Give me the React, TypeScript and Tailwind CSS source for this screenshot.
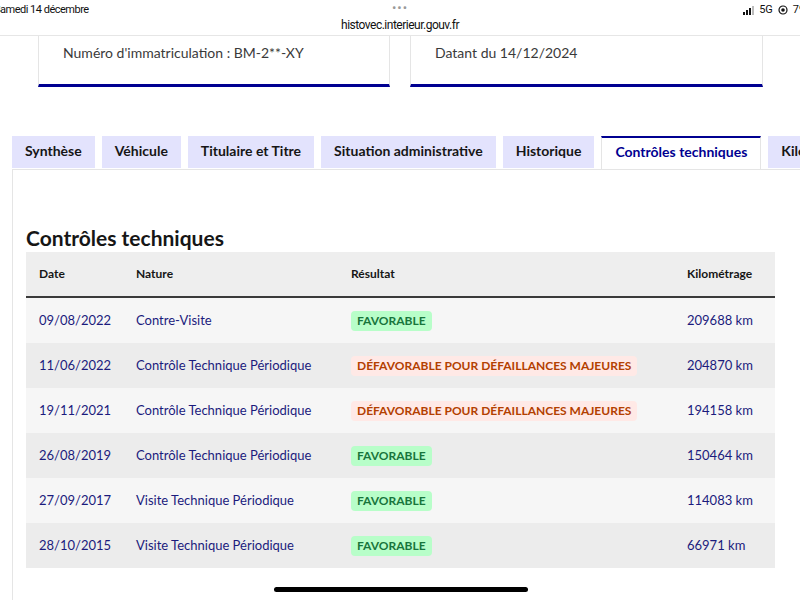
import React from 'react'

type Result = 'ok' | 'ko'

interface Control {
  date: string
  nature: string
  result: Result
  km: string
}

const tabs = [
  'Synthèse',
  'Véhicule',
  'Titulaire et Titre',
  'Situation administrative',
  'Historique',
  'Contrôles techniques',
  'Kilométrage',
]

const controls: Control[] = [
  { date: '09/08/2022', nature: 'Contre-Visite', result: 'ok', km: '209688 km' },
  { date: '11/06/2022', nature: 'Contrôle Technique Périodique', result: 'ko', km: '204870 km' },
  { date: '19/11/2021', nature: 'Contrôle Technique Périodique', result: 'ko', km: '194158 km' },
  { date: '26/08/2019', nature: 'Contrôle Technique Périodique', result: 'ok', km: '150464 km' },
  { date: '27/09/2017', nature: 'Visite Technique Périodique', result: 'ok', km: '114083 km' },
  { date: '28/10/2015', nature: 'Visite Technique Périodique', result: 'ok', km: '66971 km' },
]

function StatusBar() {
  return (
    <div className="relative h-[36px] shrink-0 border-b border-[#e6e6e6] bg-white font-['Roboto',sans-serif] text-[#111]">
      <div className="absolute left-[-6px] top-[2px] text-[11px] tracking-[-0.5px]">Samedi 14 décembre</div>
      <div className="absolute left-1/2 top-[-2px] -translate-x-1/2 text-[13px] tracking-[1px] text-[#9a9a9a]">•••</div>
      <div className="absolute left-1/2 top-[16px] -translate-x-1/2 text-[12px] tracking-[-0.5px]">histovec.interieur.gouv.fr</div>
      <div className="absolute right-[-16px] top-[2px] flex items-center gap-[5px] text-[11px]">
        <div className="flex items-end gap-[1px]">
          <span className="h-[3px] w-[2px] bg-[#111]" />
          <span className="h-[5px] w-[2px] bg-[#111]" />
          <span className="h-[7px] w-[2px] bg-[#111]" />
          <span className="h-[9px] w-[2px] bg-[#bbb]" />
        </div>
        <span>5G</span>
        <svg width="10" height="10" viewBox="0 0 10 10">
          <circle cx="5" cy="5" r="4" fill="none" stroke="#111" strokeWidth="1.2" />
          <circle cx="5" cy="5" r="1.8" fill="#111" />
        </svg>
        <span>79 %</span>
      </div>
    </div>
  )
}

function InfoCard({ children }: { children: React.ReactNode }) {
  return (
    <div className="h-[51px] border-x border-[#e5e5e5] border-b-[3px] border-b-[#000091] bg-white px-[24px] pt-[6px] text-[14px] text-[#3a3a3a]">
      {children}
    </div>
  )
}

function Badge({ result }: { result: Result }) {
  if (result === 'ok') {
    return (
      <span className="inline-flex h-[20px] items-center rounded-[4px] bg-[#b8fec9] px-[6px] text-[12px] font-bold text-[#18753c]">
        FAVORABLE
      </span>
    )
  }
  return (
    <span className="inline-flex h-[20px] items-center rounded-[4px] bg-[#ffe9e6] px-[6px] text-[12px] font-bold text-[#b34000]">
      DÉFAVORABLE POUR DÉFAILLANCES MAJEURES
    </span>
  )
}

export default function App() {
  return (
    <div className="flex h-[600px] w-[800px] flex-col overflow-hidden bg-white font-['Lato',sans-serif]">
      <StatusBar />

      {/* vehicle summary cards */}
      <div className="grid grid-cols-[352px_353px] gap-[20px] pl-[38px]">
        <InfoCard>Numéro d'immatriculation : BM-2**-XY</InfoCard>
        <InfoCard>Datant du 14/12/2024</InfoCard>
      </div>

      {/* tabs */}
      <div className="mt-[49px] flex gap-[7px] pl-[12px] whitespace-nowrap">
        {tabs.map((t) => {
          const active = t === 'Contrôles techniques'
          return (
            <div
              key={t}
              className={
                active
                  ? 'relative z-10 h-[33px] shrink-0 border-x border-t-2 border-[#e5e5e5] border-t-[#000091] bg-white px-[13px] pt-[3px] text-[14px] font-bold text-[#000091]'
                  : 'h-[32px] shrink-0 bg-[#e3e3fd] px-[13px] pt-[4px] text-[14px] font-bold text-[#161616]'
              }
            >
              {t}
            </div>
          )
        })}
      </div>

      {/* tab panel */}
      <div className="ml-[12px] flex-1 border-l border-t border-[#e5e5e5] pl-[13px] pr-[25px]">
        <h2 className="mt-[54px] text-[21px] font-bold leading-[28px] text-[#161616]">Contrôles techniques</h2>

        <div className="text-[13px]">
          <div className="grid h-[46px] grid-cols-[97px_215px_336px_1fr] items-center border-b-2 border-[#3a3a3a] bg-[#eeeeee] text-[12px] font-bold text-[#161616]">
            <div className="pl-[13px]">Date</div>
            <div className="pl-[13px]">Nature</div>
            <div className="pl-[13px]">Résultat</div>
            <div className="pl-[13px]">Kilométrage</div>
          </div>
          {controls.map((c, i) => (
            <div
              key={c.date}
              className={
                'grid h-[45px] grid-cols-[97px_215px_336px_1fr] items-center text-[#1b1b7d] ' +
                (i % 2 === 0 ? 'bg-[#f6f6f6]' : 'bg-[#ececec]')
              }
            >
              <div className="pl-[13px]">{c.date}</div>
              <div className="pl-[13px]">{c.nature}</div>
              <div className="pl-[13px]">
                <Badge result={c.result} />
              </div>
              <div className="pl-[13px]">{c.km}</div>
            </div>
          ))}
        </div>

        <div className="mt-[19px] flex justify-center">
          <div className="h-[5px] w-[254px] rounded-full bg-black" />
        </div>
      </div>
    </div>
  )
}
